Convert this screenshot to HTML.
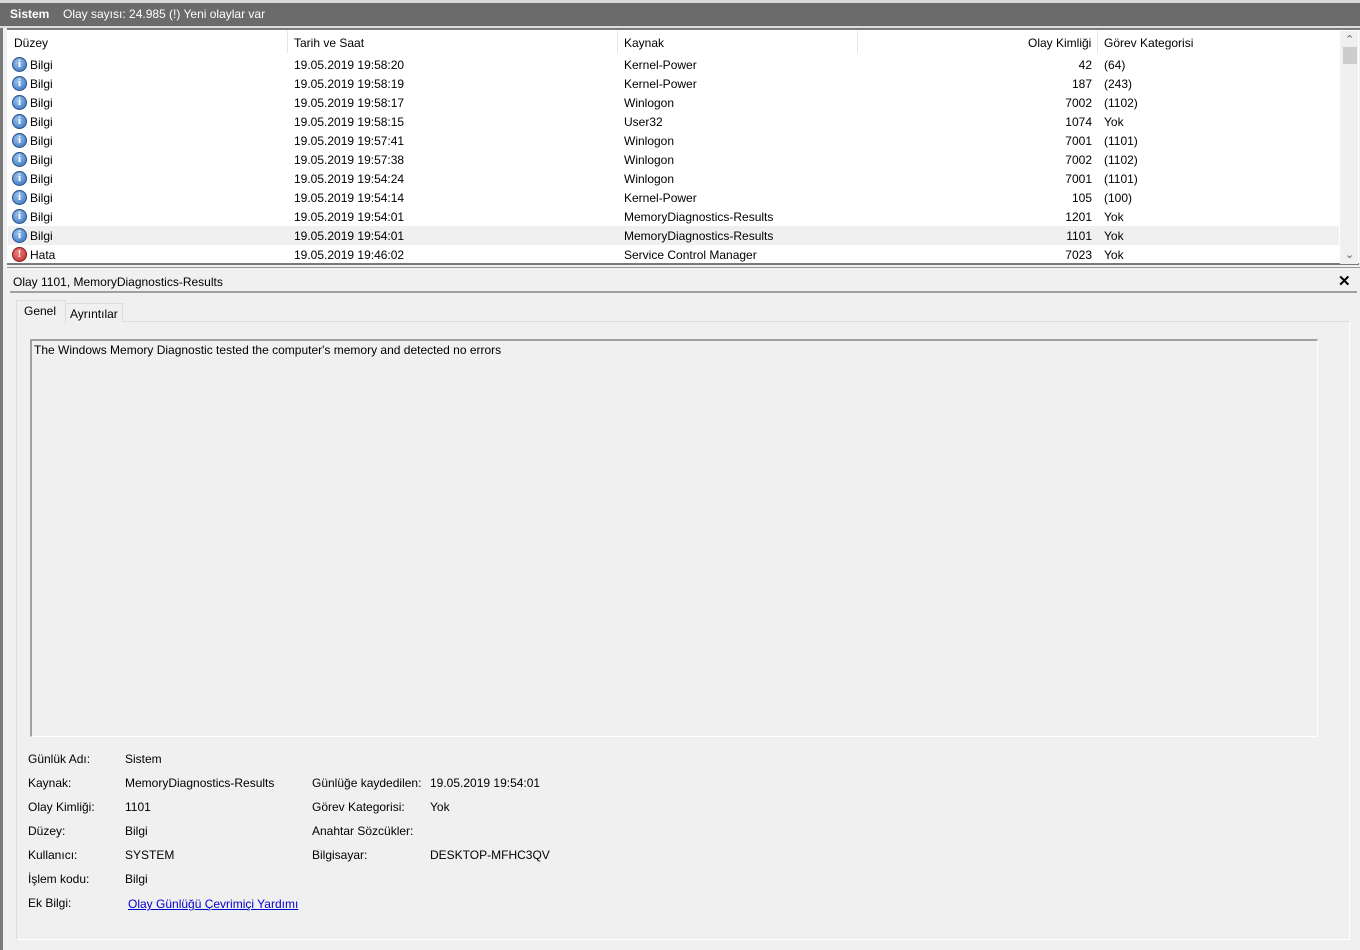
<!DOCTYPE html>
<html><head><meta charset="utf-8"><style>
*{margin:0;padding:0;box-sizing:border-box}
body{width:1360px;height:950px;background:#f0f0f0;font-family:"Liberation Sans",sans-serif;font-size:12px;color:#000;position:relative;overflow:hidden}
.a{position:absolute;white-space:nowrap}
.ico{position:absolute;left:12px;width:15px;height:15px;border-radius:50%;}
.info{background:radial-gradient(circle at 40% 35%,#9cc4ee,#2e6dbd);border:1px solid #2a4f86}
.err{background:radial-gradient(circle at 40% 35%,#f08080,#c0282c);border:1px solid #7a1a1a}
.ico b{position:absolute;left:0;right:0;top:0;text-align:center;color:#fff;font:bold 11px/13px "Liberation Serif",serif}
.hdr{position:absolute;top:31px;height:22px;border-right:1px solid #e5e5e5}
</style></head><body>
<div class="a" style="left:0;top:0;width:1360px;height:3px;background:#d9d9d9"></div>
<div class="a" style="left:0;top:3px;width:1360px;height:23px;background:#6b6b6b"></div>
<div class="a" style="left:0;top:26px;width:1360px;height:2px;background:#dcdcdc"></div>
<div class="a" style="left:0;top:28px;width:1360px;height:2px;background:#7a7a7a"></div>
<div class="a" style="left:10px;top:7px;color:#fff;font-weight:bold;font-size:12px">Sistem</div>
<div class="a" style="left:63px;top:7px;color:#fff;font-size:12px">Olay sayısı: 24.985 (!) Yeni olaylar var</div>
<div class="a" style="left:0;top:28px;width:7px;height:922px;background:#f0f0f0;border-left:3px solid #7a7a7a"></div>
<div class="a" style="left:7px;top:30px;width:1352px;height:235px;background:#fff;border-bottom:2px solid #7a7a7a"></div>
<div class="hdr" style="left:7px;width:281px"></div>
<div class="hdr" style="left:288px;width:330px"></div>
<div class="hdr" style="left:618px;width:240px"></div>
<div class="hdr" style="left:858px;width:240px"></div>
<div class="a" style="left:14px;top:36px">Düzey</div>
<div class="a" style="left:294px;top:36px">Tarih ve Saat</div>
<div class="a" style="left:624px;top:36px">Kaynak</div>
<div class="a" style="left:1028px;top:36px">Olay Kimliği</div>
<div class="a" style="left:1104px;top:36px">Görev Kategorisi</div>
<div class="a" style="left:8px;top:226px;width:1331px;height:19px;background:#f0f0f0"></div>
<div class="a" style="left:1340px;top:31px;width:18px;height:233px;background:#f0f0f0"></div>
<div class="a" style="left:1343px;top:47px;width:14px;height:17px;background:#cdcdcd"></div>
<div class="a" style="left:1345px;top:33px;color:#606060;font-size:11px">&#8963;</div>
<div class="a" style="left:1345px;top:248px;color:#606060;font-size:11px">&#8964;</div>
<div id="rows"></div>
<div class="a" style="left:7px;top:267px;width:1353px;height:1px;background:#9a9a9a"></div>
<div class="a" style="left:13px;top:275px">Olay 1101, MemoryDiagnostics-Results</div>
<div class="a" style="left:1338px;top:272px;font-weight:bold;font-size:15px">✕</div>
<div class="a" style="left:10px;top:291px;width:1347px;height:2px;background:#a0a0a0"></div>
<div class="a" style="left:16px;top:321px;width:1334px;height:619px;border:1px solid #dcdcdc;background:#f0f0f0;border-right-color:#fff;border-bottom-color:#fff"></div>
<div class="a" style="left:16px;top:300px;width:50px;height:23px;background:#f0f0f0;border:1px solid #dcdcdc;border-bottom:none;padding:3px 0 0 7px">Genel</div>
<div class="a" style="left:66px;top:303px;width:57px;height:19px;background:#f0f0f0;border:1px solid #dcdcdc;border-left:none;border-bottom:none;padding:3px 0 0 4px">Ayrıntılar</div>
<div class="a" style="left:30px;top:339px;width:1288px;height:398px;border:2px solid #a0a0a0;border-right:1px solid #fff;border-bottom:1px solid #fff;padding:2px 0 0 2px">The Windows Memory Diagnostic tested the computer's memory and detected no errors</div>
<div class="a" style="left:28px;top:747px;line-height:24px">Günlük Adı:<br>Kaynak:<br>Olay Kimliği:<br>Düzey:<br>Kullanıcı:<br>İşlem kodu:<br>Ek Bilgi:</div>
<div class="a" style="left:125px;top:747px;line-height:24px">Sistem<br>MemoryDiagnostics-Results<br>1101<br>Bilgi<br>SYSTEM<br>Bilgi</div>
<div class="a" style="left:128px;top:897px;color:#0000cc;text-decoration:underline">Olay Günlüğü Çevrimiçi Yardımı</div>
<div class="a" style="left:312px;top:771px;line-height:24px">Günlüğe kaydedilen:<br>Görev Kategorisi:<br>Anahtar Sözcükler:<br>Bilgisayar:</div>
<div class="a" style="left:430px;top:771px;line-height:24px">19.05.2019 19:54:01<br>Yok<br><br>DESKTOP-MFHC3QV</div>
<script>
var d=[["19.05.2019 19:58:20","Kernel-Power","42","(64)"],["19.05.2019 19:58:19","Kernel-Power","187","(243)"],["19.05.2019 19:58:17","Winlogon","7002","(1102)"],["19.05.2019 19:58:15","User32","1074","Yok"],["19.05.2019 19:57:41","Winlogon","7001","(1101)"],["19.05.2019 19:57:38","Winlogon","7002","(1102)"],["19.05.2019 19:54:24","Winlogon","7001","(1101)"],["19.05.2019 19:54:14","Kernel-Power","105","(100)"],["19.05.2019 19:54:01","MemoryDiagnostics-Results","1201","Yok"],["19.05.2019 19:54:01","MemoryDiagnostics-Results","1101","Yok"],["19.05.2019 19:46:02","Service Control Manager","7023","Yok"]];
var h="";d.forEach(function(r,i){var y=58+i*19;var e=i==10;
h+='<div class="ico '+(e?'err':'info')+'" style="top:'+(y-1)+'px"><b>'+(e?'!':'i')+'</b></div>';
h+='<div class="a" style="left:30px;top:'+y+'px">'+(e?'Hata':'Bilgi')+'</div>';
h+='<div class="a" style="left:294px;top:'+y+'px">'+r[0]+'</div>';
h+='<div class="a" style="left:624px;top:'+y+'px">'+r[1]+'</div>';
h+='<div class="a" style="right:268px;top:'+y+'px">'+r[2]+'</div>';
h+='<div class="a" style="left:1104px;top:'+y+'px">'+r[3]+'</div>';});
document.getElementById("rows").innerHTML=h;
</script>
</body></html>
